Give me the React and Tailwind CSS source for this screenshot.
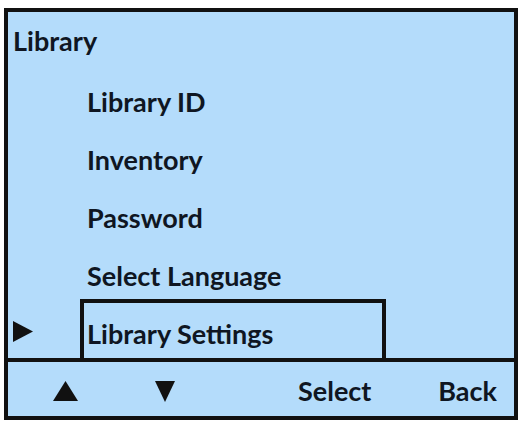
import React from 'react';

const ITEMS = ['Library ID', 'Inventory', 'Password', 'Select Language'];

const Tri = ({ dir, className }) => {
  const pts = {
    up: '50,0 100,100 0,100',
    down: '0,0 100,0 50,100',
    right: '0,0 100,50 0,100',
  }[dir];
  return (
    <svg viewBox="0 0 100 100" preserveAspectRatio="none" className={className}>
      <polygon points={pts} fill="#111" />
    </svg>
  );
};

export default function App() {
  return (
    <div className="w-[520px] h-[421px] bg-white pl-[4px] pt-[8px]" style={{ fontFamily: 'Lato, "Open Sans", sans-serif' }}>
      <div className="w-[514px] h-[412px] border-4 border-[#111] bg-[#b4dcfb] flex flex-col text-[#0f1622] font-bold text-[27px] leading-[32px]">
        {/* MENU */}
        <div className="h-[346px] flex flex-col">
          <div className="pl-[5px] pt-[13px]">Library</div>
          <div className="flex flex-col pl-[79px] mt-[29px] gap-[26px]">
            {ITEMS.map((item) => (
              <div key={item}>{item}</div>
            ))}
          </div>
          <div className="flex mt-[7px] flex-1">
            <div className="w-[72px] flex items-start pt-[22px] pl-[5px]">
              <Tri dir="right" className="w-[20px] h-[21px]" />
            </div>
            <div className="w-[306px] border-t-4 border-l-4 border-r-4 border-[#111] pt-[15px] pl-[3px]">
              Library Settings
            </div>
          </div>
        </div>

        {/* SOFT KEYS */}
        <div className="flex-1 border-t-4 border-[#111] flex items-center pt-[4px]">
          <Tri dir="up" className="ml-[45px] w-[25px] h-[20px]" />
          <Tri dir="down" className="ml-[77px] w-[20px] h-[21px]" />
          <div className="ml-[123px]">Select</div>
          <div className="ml-auto mr-[17px]">Back</div>
        </div>
      </div>
    </div>
  );
}
